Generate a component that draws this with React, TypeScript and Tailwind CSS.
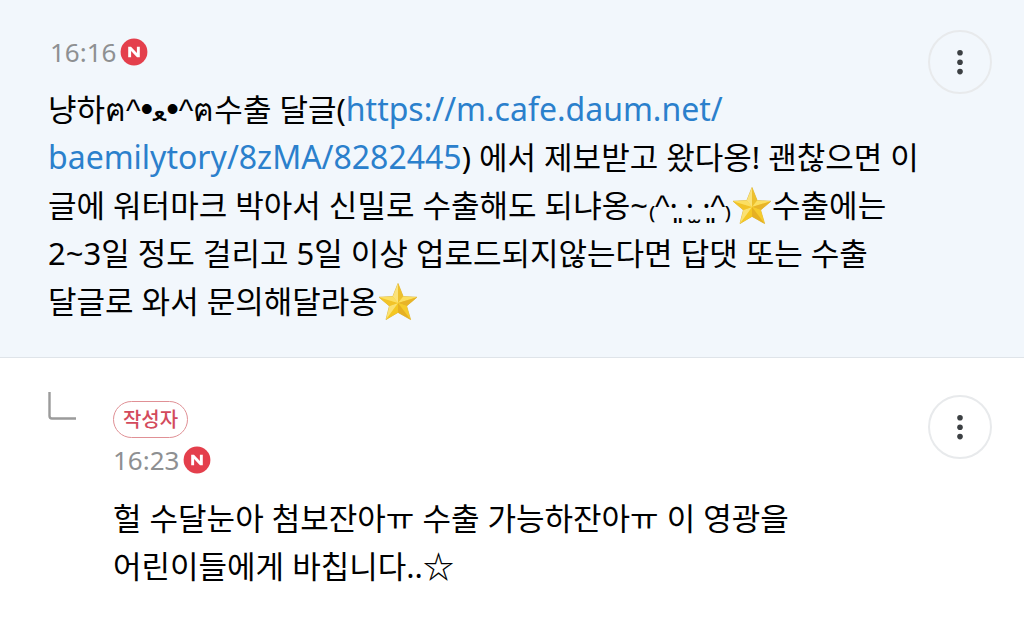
import type { ReactNode } from 'react'

function NewBadge() {
  return (
    <svg viewBox="0 0 28 28" className="size-7 shrink-0" role="img" aria-label="새 댓글">
      <circle cx="14" cy="14" r="13.4" fill="#e43f4c" />
      <path d="M8.2 19.2V8.8H11L16.9 14.9V8.8H19.8V19.2H17L11.1 13.1V19.2Z" fill="#fff" />
    </svg>
  )
}

function StarEmoji() {
  return (
    <svg viewBox="0 0 40 40" className="inline-block size-10 align-[-9px]" role="img" aria-label="별">
      <path d="M20 1.5L25.2 14.6L39 15.2L28.6 24L32.6 37.6L20 30.4L8 37.6L11.4 24L1 15.2L14.8 14.6Z" fill="#f7cf2e" stroke="#d9b545" strokeWidth="0.8" strokeLinejoin="round" />
      <path d="M20 1.5L20 21L14.8 14.6Z" fill="#fae27a" />
      <path d="M20 1.5L25.2 14.6L20 21Z" fill="#edc02e" />
      <path d="M39 15.2L20 21L25.2 14.6Z" fill="#fbdf62" />
      <path d="M39 15.2L28.6 24L20 21Z" fill="#e8b428" />
      <path d="M32.6 37.6L20 21L28.6 24Z" fill="#f5cb2c" />
      <path d="M32.6 37.6L20 30.4L20 21Z" fill="#e6b022" />
      <path d="M8 37.6L20 21L20 30.4Z" fill="#f4c722" />
      <path d="M8 37.6L11.4 24L20 21Z" fill="#fae172" />
      <path d="M1 15.2L20 21L11.4 24Z" fill="#f2c328" />
      <path d="M1 15.2L14.8 14.6L20 21Z" fill="#fbdf62" />
    </svg>
  )
}

function Caret() {
  return <span className="font-['Liberation_Sans',sans-serif] leading-none">^</span>
}

function Eye() {
  return <span className="font-['Liberation_Sans',sans-serif] text-[36px] leading-none">•</span>
}

function MoreButton() {
  return (
    <button
      type="button"
      aria-label="더보기"
      className="flex size-16 shrink-0 items-center justify-center rounded-full border-2 border-[#e8eaec]"
    >
      <svg viewBox="0 0 8 26" className="h-[26px] w-2" fill="#3c4043">
        <circle cx="4" cy="3.8" r="2.8" />
        <circle cx="4" cy="13.2" r="2.8" />
        <circle cx="4" cy="22.6" r="2.8" />
      </svg>
    </button>
  )
}

function Time({ children }: { children: ReactNode }) {
  return (
    <div className="flex items-center gap-1">
      <time className="text-[26px] leading-8 text-[#8e9092]">{children}</time>
      <NewBadge />
    </div>
  )
}

export default function App() {
  return (
    <main className="min-h-screen bg-white font-['Noto_Sans','Noto_Sans_CJK_KR',sans-serif] text-black">
      <article className="border-b border-[#dfe4e9] bg-[#f2f7fc] pt-[30px] pr-8 pb-8 pl-12">
        <div className="flex h-[55px] items-start justify-between">
          <div className="pt-1.5 pl-0.5">
            <Time>16:16</Time>
          </div>
          <MoreButton />
        </div>
        <p className="text-[31px] leading-12 whitespace-nowrap">
          냥하ฅ
          <Caret />
          <Eye />
          <span className="text-[27px] leading-none">ﻌ</span>
          <Eye />
          <Caret />
          ฅ수출 달글(
          <a
            href="https://m.cafe.daum.net/baemilytory/8zMA/8282445"
            className="text-[32px] leading-none text-[#2b80cc]"
          >
            https://m.cafe.daum.net/
            <br />
            baemilytory/8zMA/8282445
          </a>
          ) 에서 제보받고 왔다옹! 괜찮으면 이
          <br />
          글에 워터마크 박아서 신밀로 수출해도 되냐옹~₍
          <Caret />
          ·͈ ·̫ ·͈
          <Caret />
          ₎
          <StarEmoji />
          수출에는
          <br />
          2~3일 정도 걸리고 5일 이상 업로드되지않는다면 답댓 또는 수출
          <br />
          달글로 와서 문의해달라옹
          <StarEmoji />
        </p>
      </article>

      <article className="flex pt-8 pr-8 pb-7 pl-12">
        <div className="w-[65px] shrink-0 pt-0.5">
          <svg viewBox="0 0 30 30" className="size-[30px]" fill="none" stroke="#9b9b9b" strokeWidth="2.4">
            <path d="M1.5 0V24Q1.5 26.5 4 26.5H28" />
          </svg>
        </div>
        <div className="min-w-0 flex-1 pt-[5px]">
          <div className="flex h-[99px] items-start justify-between">
            <div className="pt-1.5">
              <span className="mb-1.5 flex h-[37px] w-[75px] items-center justify-center rounded-full border border-[#e09095] text-xl font-medium text-[#d34a5c]">
                작성자
              </span>
              <Time>16:23</Time>
            </div>
            <MoreButton />
          </div>
          <p className="text-[31px] leading-12 whitespace-nowrap">
            헐 수달눈아 첨보잔아ㅠ 수출 가능하잔아ㅠ 이 영광을
            <br />
            어린이들에게 바칩니다..<span className="font-medium">☆</span>
          </p>
        </div>
      </article>
    </main>
  )
}
